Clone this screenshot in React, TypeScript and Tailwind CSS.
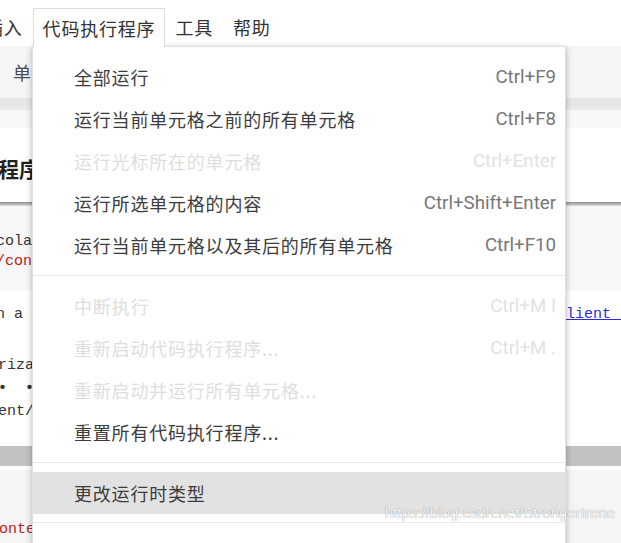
import React from "react"

type Item = { label: string; shortcut?: string; disabled?: boolean; hover?: boolean }

const groups: Item[][] = [
  [
    { label: "全部运行", shortcut: "Ctrl+F9" },
    { label: "运行当前单元格之前的所有单元格", shortcut: "Ctrl+F8" },
    { label: "运行光标所在的单元格", shortcut: "Ctrl+Enter", disabled: true },
    { label: "运行所选单元格的内容", shortcut: "Ctrl+Shift+Enter" },
    { label: "运行当前单元格以及其后的所有单元格", shortcut: "Ctrl+F10" },
  ],
  [
    { label: "中断执行", shortcut: "Ctrl+M I", disabled: true },
    { label: "重新启动代码执行程序...", shortcut: "Ctrl+M .", disabled: true },
    { label: "重新启动并运行所有单元格...", disabled: true },
    { label: "重置所有代码执行程序..." },
  ],
  [{ label: "更改运行时类型", hover: true }],
]

const MenuRow = ({ item }: { item: Item }) => (
  <div
    className={`h-[42px] flex items-center justify-between pl-[41px] pr-[9px] ${
      item.hover ? "bg-[#e2e2e2]" : ""
    }`}
  >
    <span className={item.disabled ? "text-[#dedede]" : "text-[#3c3c3c]"}>{item.label}</span>
    {item.shortcut && (
      <span
        className={`font-['Roboto',sans-serif] text-[18.7px] tracking-normal ${
          item.disabled ? "text-[#e2e2e2]" : "text-[#777]"
        }`}
      >
        {item.shortcut}
      </span>
    )}
  </div>
)

const RuntimeMenu = () => (
  <div className="absolute left-[32px] top-[46px] z-10 w-[534px] h-[520px] bg-white border border-[#e0e0e0] shadow-[0_2px_6px_rgba(0,0,0,0.3)] pt-[9px] text-[18px] tracking-[0.8px]">
    {groups.map((group, i) => (
      <div key={i}>
        {i > 0 && <div className="my-[9px] h-px bg-[#e8e8e8]" />}
        {group.map((item) => (
          <MenuRow key={item.label} item={item} />
        ))}
      </div>
    ))}
    <div className="my-[8px] h-px bg-[#e8e8e8]" />
  </div>
)

const App = () => {
  return (
    <div className="relative w-[621px] h-[543px] overflow-hidden bg-white flex flex-col font-['Noto_Sans_CJK_SC',sans-serif] text-[#333]">
      {/* top menu bar */}
      <div className="h-[46px] shrink-0 flex items-end bg-white text-[18px] tracking-[0.8px] text-[#333]">
        <div className="-ml-[25px] h-[38px] px-[10px] flex items-center">插入</div>
        <div className="relative z-20 -mb-px h-[39px] px-[9px] flex items-center bg-white border border-b-0 border-[#dcdcdc]">
          代码执行程序
        </div>
        <div className="h-[38px] px-[10px] flex items-center">工具</div>
        <div className="h-[38px] px-[10px] flex items-center">帮助</div>
      </div>

      {/* toolbar */}
      <div className="h-[52px] shrink-0 flex items-center pl-[13px] bg-[#f5f5f5] text-[18px] text-[#4a4a55]">
        单元格
      </div>
      <div className="h-[12px] shrink-0 bg-gradient-to-b from-[#e4e4e4] to-[#ebebeb]" />
      <div className="h-[18px] shrink-0 bg-[#f8f8f8]" />

      {/* heading cell */}
      <div className="h-[74px] shrink-0 flex items-center pt-[8px] -ml-[2px] bg-white text-[21px] font-bold text-[#222]">
        程序示例
      </div>
      <div className="h-[4px] shrink-0 bg-gradient-to-b from-[#8c8c8c] to-[#dedede]" />

      {/* code cell */}
      <div className="h-[84px] shrink-0 pt-[26px] bg-[#f7f7f7] font-['Liberation_Mono',monospace] text-[15px] leading-[20px] whitespace-nowrap -ml-[4px]">
        <div>colab import drive</div>
        <div className="text-[#c0201c]"> /content/drive</div>
      </div>

      {/* output */}
      <div className="h-[156px] shrink-0 pt-[15px] bg-white font-['Liberation_Mono',monospace] text-[15px] text-[#333] whitespace-nowrap">
        <div className="flex leading-[20px]">
          <span className="-ml-[4px]">n a</span>
          <a className="ml-auto w-[55px] overflow-hidden text-[#2a2ae0] underline">lient_id</a>
        </div>
        <div className="mt-[29px] leading-[23px] -ml-[2px]">
          <div>rizati</div>
          <div className="font-bold"> • &nbsp;•</div>
          <div>ent/</div>
        </div>
      </div>
      <div className="h-[20px] shrink-0 bg-[#c2c2c2]" />
      <div className="h-[4px] shrink-0 bg-white" />
      <div className="flex-1 pt-[49px] bg-[#f5f5f5] font-['Liberation_Mono',monospace] text-[15px] text-[#c0201c] whitespace-nowrap -ml-[1px]">
        onte
      </div>

      <RuntimeMenu />

      <div className="absolute right-[6px] top-[502px] z-30 font-['Liberation_Sans',sans-serif] text-[15px] text-[#f4f4f4] [text-shadow:0_0_1px_rgba(0,0,0,0.45)]">
        https://blog.csdn.net/StrongerIrene
      </div>
    </div>
  )
}

export default App
